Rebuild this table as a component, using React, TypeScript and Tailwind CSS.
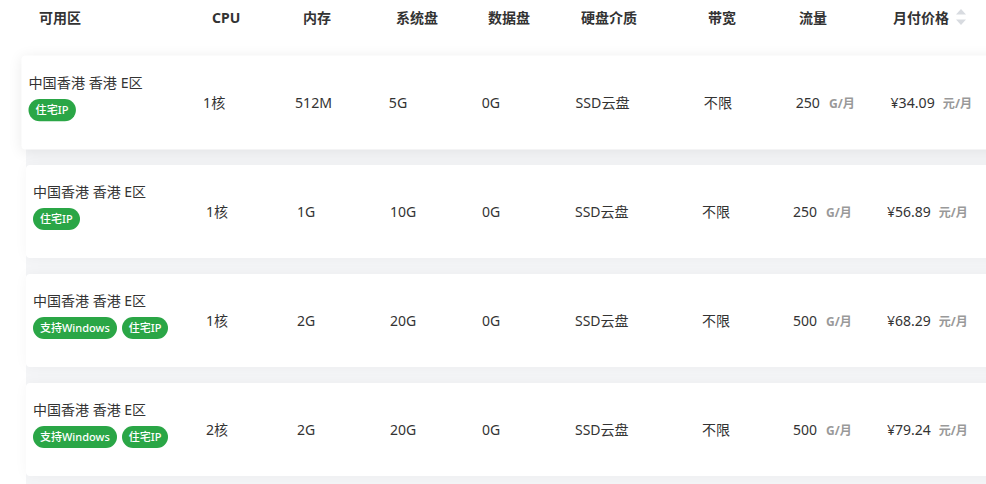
import React from "react";

type Row = {
  tags: string[];
  cpu: string;
  mem: string;
  sys: string;
  data: string;
  flow: string;
  price: string;
};

const rows: Row[] = [
  { tags: ["住宅IP"], cpu: "1核", mem: "512M", sys: "5G", data: "0G", flow: "250", price: "¥34.09" },
  { tags: ["住宅IP"], cpu: "1核", mem: "1G", sys: "10G", data: "0G", flow: "250", price: "¥56.89" },
  { tags: ["支持Windows", "住宅IP"], cpu: "1核", mem: "2G", sys: "20G", data: "0G", flow: "500", price: "¥68.29" },
  { tags: ["支持Windows", "住宅IP"], cpu: "2核", mem: "2G", sys: "20G", data: "0G", flow: "500", price: "¥79.24" },
];

const grid =
  "grid grid-cols-[173px_91px_93px_92px_93px_127px_91px_94px_1fr] items-center";

function SortIcon() {
  return (
    <svg width="12" height="20" viewBox="0 0 12 20" className="ml-[6px]">
      <path d="M6 2 L11 7.5 L1 7.5 Z" fill="#d8dbe0" />
      <path d="M6 18 L11 12.5 L1 12.5 Z" fill="#d8dbe0" />
    </svg>
  );
}

export default function App() {
  const headers = ["可用区", "CPU", "内存", "系统盘", "数据盘", "硬盘介质", "带宽", "流量", "月付价格"];
  return (
    <div
      className="w-full h-[484px] overflow-hidden bg-white text-[#333]"
      style={{ fontFamily: '"Noto Sans", "Noto Sans CJK SC", sans-serif' }}
    >
      <div className="w-[1000px]">
        <div className={`${grid} ml-[26px] pl-[7px] h-[34px] text-[14px] font-bold`}>
          {headers.map((h, i) => (
            <div key={h} className="pl-[6px] flex items-center">
              {h}
              {i === headers.length - 1 && <SortIcon />}
            </div>
          ))}
        </div>
        <div className="mt-[22px] ml-[26px] bg-[#f4f5f7] flex flex-col gap-[16px] pb-[10px]">
          {rows.map((r, idx) => (
            <div
              key={idx}
              className={`${grid} h-[93px] bg-white rounded-[4px] pl-[7px] text-[14px] ${
                idx === 0
                  ? "scale-[1.0094] shadow-[0_2px_14px_rgba(0,0,0,0.08)] relative z-10"
                  : "shadow-[0_0_14px_rgba(0,0,0,0.04)]"
              }`}
            >
              <div className="flex flex-col gap-[6px] pb-[11px]">
                <div className="leading-[20px]">中国香港 香港 E区</div>
                <div className="flex gap-[5px]">
                  {r.tags.map((t) => (
                    <span
                      key={t}
                      className="bg-[#2aa646] text-white text-[11px] font-medium leading-[22px] h-[22px] px-[7px] rounded-full"
                    >
                      {t}
                    </span>
                  ))}
                </div>
              </div>
              <div>{r.cpu}</div>
              <div>{r.mem}</div>
              <div>{r.sys}</div>
              <div>{r.data}</div>
              <div>SSD云盘</div>
              <div>不限</div>
              <div className="flex items-baseline">
                <span>{r.flow}</span>
                <span className="ml-[9px] text-[12px] font-bold text-[#999]">G/月</span>
              </div>
              <div className="flex items-baseline">
                <span>{r.price}</span>
                <span className="ml-[8px] text-[12px] font-bold text-[#999]">元/月</span>
              </div>
            </div>
          ))}
        </div>
      </div>
    </div>
  );
}
